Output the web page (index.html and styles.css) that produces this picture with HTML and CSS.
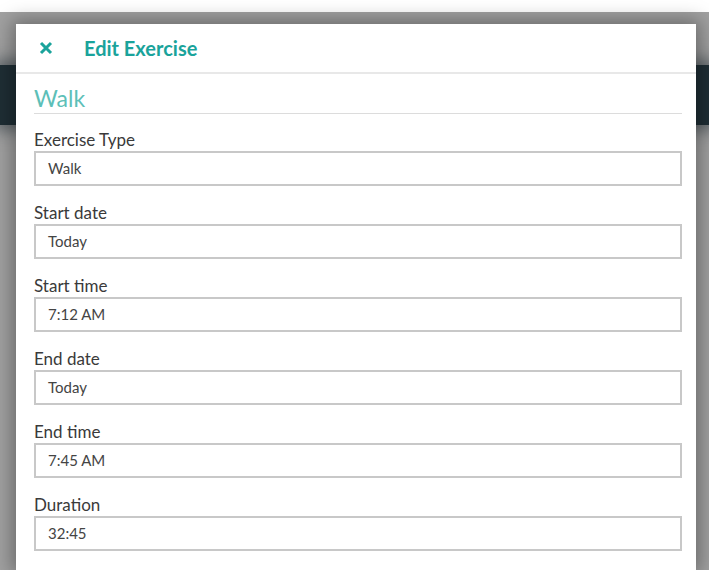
FILE: index.html
```html
<!DOCTYPE html>
<html>
<head>
<meta charset="utf-8">
<link rel="stylesheet" href="styles.css">
</head>
<body>
<div class="page">
  <div class="top-strip"></div>
  <div class="backdrop">
    <div class="gap-a"></div>
    <div class="dark-band"></div>
    <div class="gap-b"></div>
  </div>
  <div class="modal">
    <div class="modal-header">
      <span class="close" aria-label="Close">
        <svg width="14" height="14" viewBox="0 0 14 14"><path d="M2 2 L12 12 M12 2 L2 12" stroke="#1aa39b" stroke-width="3" stroke-linecap="butt"/></svg>
      </span>
      <h1 class="title">Edit Exercise</h1>
    </div>
    <div class="modal-body">
      <h2 class="section-title">Walk</h2>
      <div class="field"><label class="field-label">Exercise Type</label><div class="input">Walk</div></div>
      <div class="field"><label class="field-label">Start date</label><div class="input">Today</div></div>
      <div class="field"><label class="field-label">Start time</label><div class="input">7:12 AM</div></div>
      <div class="field"><label class="field-label">End date</label><div class="input">Today</div></div>
      <div class="field"><label class="field-label">End time</label><div class="input">7:45 AM</div></div>
      <div class="field"><label class="field-label">Duration</label><div class="input">32:45</div></div>
    </div>
  </div>
</div>
</body>
</html>
```
FILE: styles.css
```css
html, body {
  margin: 0;
  padding: 0;
  height: 100%;
  overflow: hidden;
}
body {
  font-family: Lato, "Open Sans", sans-serif;
  background: #a4a4a4;
}
.page {
  position: relative;
  height: 570px;
  overflow: hidden;
}
.top-strip {
  height: 12px;
  background: #ffffff;
}
.backdrop {
  background: #a1a1a1;
}
.gap-a { height: 53px; }
.dark-band {
  height: 60px;
  background: #1f2e35;
  box-shadow: 0 0 14px 6px rgba(31, 46, 53, 0.5);
}
.gap-b { height: 450px; }
.modal {
  position: absolute;
  top: 24px;
  left: 16px;
  width: 680px;
  bottom: 0;
  background: #ffffff;
  box-shadow: 0 0 18px 4px rgba(0, 0, 0, 0.35);
}
.modal-header {
  display: flex;
  align-items: center;
  border-bottom: 2px solid #e8e8e8;
  padding-left: 23px;
  padding-bottom: 1px;
  box-sizing: border-box;
  height: 50px;
}
.close {
  display: flex;
  width: 14px;
  height: 14px;
  margin-right: 31px;
}
.title {
  margin: 0;
  font-size: 20px;
  font-weight: 700;
  color: #1aa39b;
}
.modal-body {
  padding: 11px 14px 0 18px;
}
.section-title {
  margin: 0;
  font-size: 23px;
  font-weight: 400;
  color: #5dbfb8;
  line-height: 26px;
  padding-bottom: 2px;
  border-bottom: 1px solid #dcdcdc;
  margin-bottom: 17px;
}
.field {
  margin-bottom: 18px;
}
.field-label {
  display: block;
  font-size: 17px;
  color: #3a3a3a;
  line-height: 18px;
  margin-bottom: 2px;
}
.input {
  border: 2px solid #c8c8c8;
  height: 31px;
  line-height: 31px;
  padding-left: 12px;
  font-size: 15px;
  color: #444444;
}
```
